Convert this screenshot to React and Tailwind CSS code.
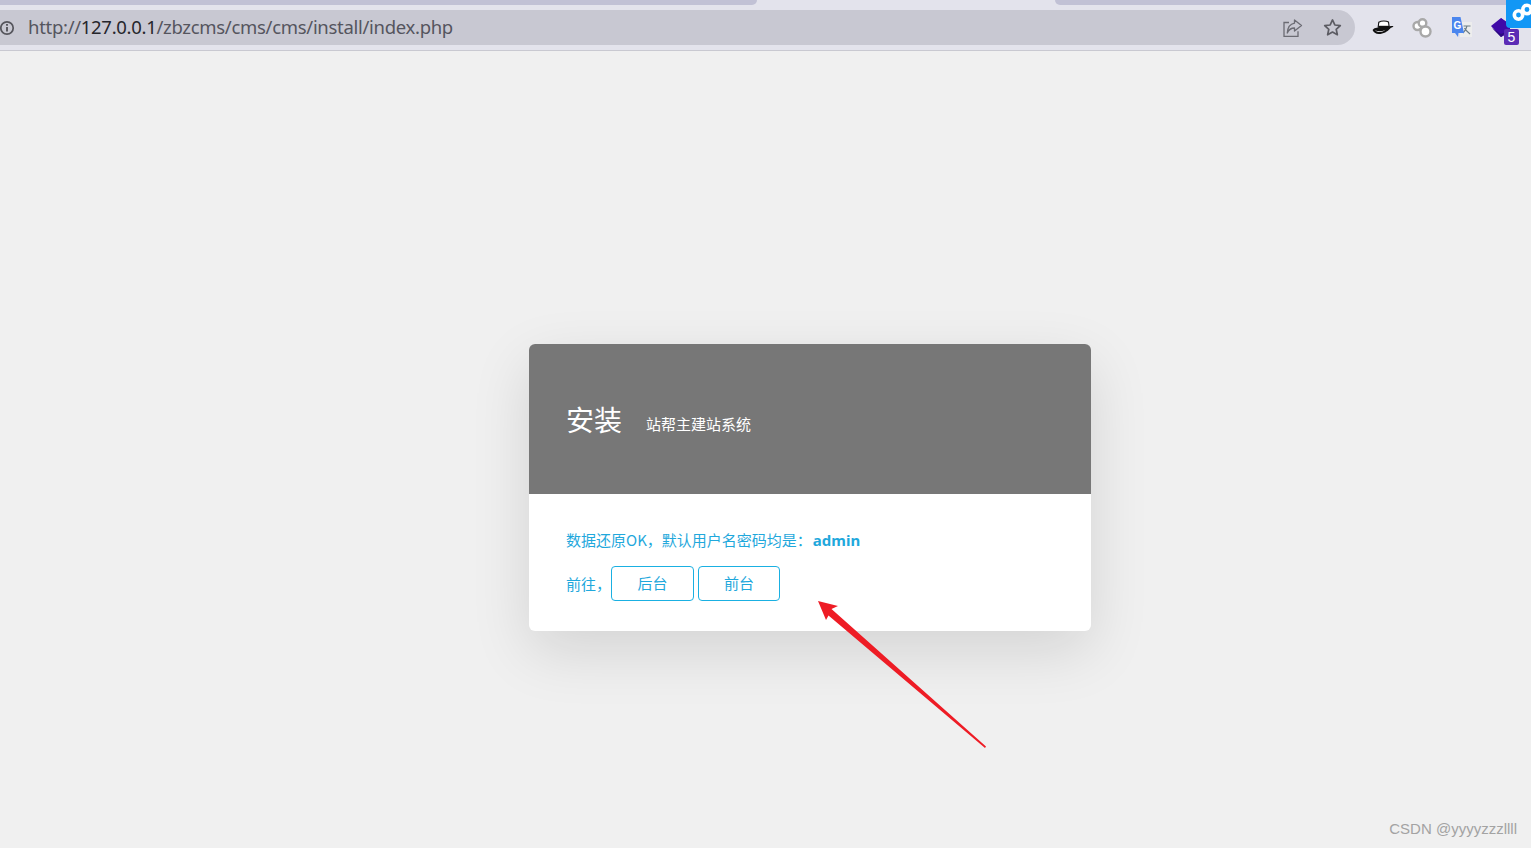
import React from "react";

const CJK = "font-['Noto_Sans_CJK_SC','Noto_Sans',sans-serif]";

/* ---------- Toolbar icons ---------- */
const InfoIcon = () => (
  <svg width="16" height="16" viewBox="0 0 16 16" className="-ml-[1px] shrink-0" fill="none" stroke="#55555c">
    <circle cx="8" cy="8" r="6.200" strokeWidth="1.700" />
    <path d="M8 7v4.400" strokeWidth="1.900" />
    <path d="M8 4.100v1.700" strokeWidth="1.900" />
  </svg>
);

const ShareIcon = () => (
  <svg width="20" height="18" viewBox="0 0 20 18" fill="none" stroke="#6b6b73" strokeWidth="1.300">
    <path d="M6 3.500H1v13.800h14v-5" />
    <path d="M11.500 1l7 5.600-7 5.400V9C8 9 5.800 10.600 4.300 14 4.600 9 7 5 11.500 4.200z" strokeLinejoin="round" />
  </svg>
);

const StarIcon = () => (
  <svg width="19" height="19" viewBox="0 0 18 18" fill="none" stroke="#5c5c63" strokeWidth="1.600" strokeLinejoin="round">
    <path d="M9 1.800l2.200 4.800 5.200.6-3.900 3.500 1.100 5.200L9 13.300l-4.600 2.600 1.100-5.200-3.900-3.500 5.200-.6z" />
  </svg>
);

const HatIcon = () => (
  <svg width="22" height="15" viewBox="0 0 22 15">
    <path d="M6 8.500L6.800 2.200C9.500.7 14 .7 16.500 2l.8 6z" fill="#fff" stroke="#111" strokeWidth="1.100" />
    <path d="M6.300 5.800h11v2.700H6.300z" fill="#111" />
    <path d="M.6 10C2 8 4.500 7.400 6 8c4 .8 9-.4 12-1.700 1.300-.4 2.600-.4 3.500 0-.8 1-2.400 1.300-3.300 2.200C15.500 11.500 11.500 14 6.800 14 3.800 14 1.200 12.200.6 10z" fill="#111" />
    <path d="M3 10.300c3 1.500 7 1.200 10.500-.6-3 2.800-8 3.300-10.500.6z" fill="#f1f1f5" />
  </svg>
);

const RingsIcon = () => (
  <svg width="20" height="20" viewBox="0 0 20 20" fill="none" stroke="#a8a8a8" strokeWidth="2.400">
    <circle cx="5.500" cy="8" r="4" fill="#fff" />
    <circle cx="10.500" cy="5" r="3.800" fill="#fff" />
    <circle cx="13.500" cy="13.500" r="5" fill="#fff" />
  </svg>
);

const TranslateIcon = () => (
  <svg width="22" height="22" viewBox="0 0 22 22">
    <rect x="9" y="5" width="12" height="15" fill="#ededed" />
    <path d="M12.500 9h7M16 9c-.5 3-2 5-4 7M13.500 11c1 2 3 4 5.500 6" stroke="#6b7c85" strokeWidth="1.200" fill="none" />
    <path d="M1 0h8.500L13 16H7.500L7 20l-3-4H1z" fill="#4b86ee" />
    <text x="2.600" y="11.500" fontSize="10" fontWeight="700" fill="#fff" fontFamily="Liberation Sans, sans-serif">G</text>
  </svg>
);

const DiamondIcon = () => (
  <svg width="19" height="20" viewBox="0 0 19 20">
    <path d="M10 0l9 6v8H11z" fill="#3f0aa8" />
    <path d="M0 8l10-8 6 6v10l-6 3z" fill="#3f0aa8" />
    <path d="M1 10l9 6 5-2-5 5z" fill="#2c0a80" />
  </svg>
);

const LinkBadge = () => (
  <div className="absolute top-0 right-0 w-[25px] h-[28px] bg-[#1297f5] rounded-bl-[4px] overflow-hidden">
    <svg width="32" height="28" viewBox="0 0 32 28" fill="none" stroke="#fff" strokeWidth="3.600">
      <circle cx="12.500" cy="15" r="4.200" />
      <circle cx="21" cy="9.500" r="4.200" />
      <path d="M14.500 13l4-2" />
    </svg>
  </div>
);

/* ---------- Browser chrome ---------- */
function Toolbar() {
  return (
    <header className="relative h-[51px] bg-[#e3e3ec] border-b border-[#c9c9d1] overflow-hidden">
      <div className="flex justify-between h-[5px]">
        <div className="w-[757px] bg-[#c1c1d5] rounded-br-[6px]" />
        <div className="w-[476px] bg-[#c1c1d5] rounded-bl-[6px]" />
      </div>

      <div className="flex items-center mt-[5px] h-[35px]">
        <div className="flex items-center w-[1355px] h-full bg-[#c8c8d2] rounded-r-full">
          <InfoIcon />
          <div className="ml-[13px] flex-1 text-[18.500px] leading-[34px] pb-[1px] font-['Noto_Sans',sans-serif] text-[#55555e] whitespace-nowrap tracking-[-0.300px]">
            http://<span className="text-[#26262c]">127.0.0.1</span>/zbzcms/cms/cms/install/index.php
          </div>
          <div className="flex items-center gap-[20px] mr-[13px] ml-[1px]">
            <ShareIcon />
            <StarIcon />
          </div>
        </div>
        <div className="flex items-center ml-[17px] gap-[18px]">
          <HatIcon />
          <RingsIcon />
          <div className="ml-[1px]">
            <TranslateIcon />
          </div>
          <div className="relative">
            <DiamondIcon />
            <span className="absolute top-[11px] left-[13px] w-[15px] h-[16px] bg-[#5b2bb5] rounded-[2px] text-white text-[14px] leading-[16px] text-center font-['Liberation_Sans',sans-serif]">
              5
            </span>
          </div>
        </div>
      </div>

      <LinkBadge />
    </header>
  );
}

/* ---------- Page ---------- */
export default function App() {
  return (
    <div className={`relative h-[848px] overflow-hidden bg-[#f0f0f0] ${CJK}`}>
      <Toolbar />

      <main className="pt-[293px] pl-[529px]">
        <div className="w-[562px] h-[287px] rounded-[6px] overflow-hidden bg-white shadow-[0_20px_60px_rgba(0,0,0,0.12)]">
          <div className="h-[150px] bg-[#777777] pl-[37px] pt-[54px] flex items-baseline text-white">
            <h1 className="text-[28px] leading-[42px]">安装</h1>
            <span className="ml-[24px] text-[15px] -translate-y-[1px]">站帮主建站系统</span>
          </div>

          <div className="pl-[37px] pt-[35px] text-[15px] text-[#1fa8dc]">
            <p className="leading-[22px]">
              数据还原OK，默认用户名密码均是：<b className="ml-[1px] font-bold font-['Noto_Sans',sans-serif] text-[15px]">admin</b>
            </p>
            <div className="flex items-center mt-[15px]">
              <span className="pt-[1px]">前往，</span>
              <button className="w-[83px] h-[35px] border border-[#1ab0e2] rounded-[4px] text-[#1fa8dc]">后台</button>
              <button className="ml-[4px] w-[82px] h-[35px] border border-[#1ab0e2] rounded-[4px] text-[#1fa8dc]">前台</button>
            </div>
          </div>
        </div>
      </main>

      {/* annotation arrow over the page */}
      <svg className="absolute left-[800px] top-[590px]" width="200" height="170" viewBox="800 590 200 170">
        <polygon points="818,601 838,606 831.500,609 986,746.500 985,748 828.500,615.500 826,620" fill="#ee1c25" />
      </svg>

      <span className="absolute right-[14px] bottom-[9px] text-[15px] leading-[20px] text-[#a3a3a3] font-['Liberation_Sans',sans-serif]">
        CSDN @yyyyzzzllll
      </span>
    </div>
  );
}
